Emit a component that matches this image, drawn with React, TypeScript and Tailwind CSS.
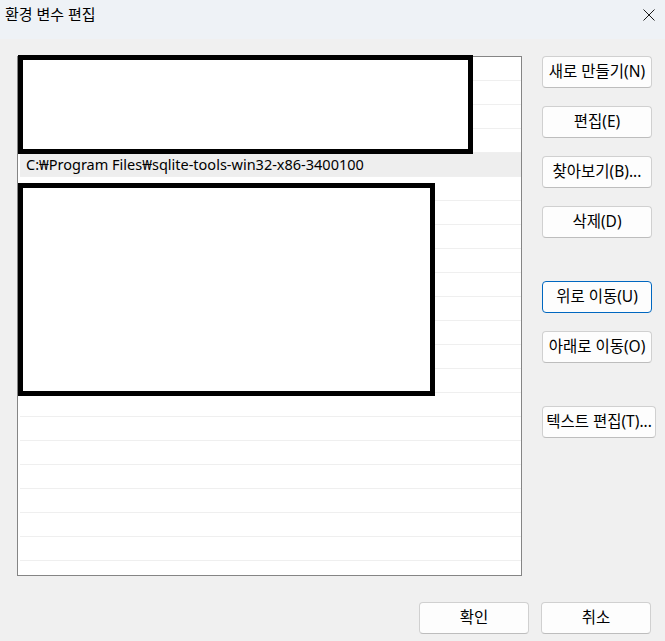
import React from 'react';

const FONT = { fontFamily: '"Noto Sans", "Noto Sans CJK KR", sans-serif' };

function WinButton({ label, width = 'w-[110px]', focused = false }: { label: string; width?: string; focused?: boolean }) {
  return (
    <button
      className={`${width} h-[32px] shrink-0 rounded-[4px] border bg-[#fdfdfd] text-[15.5px] leading-none text-black flex items-center justify-center whitespace-nowrap ${
        focused ? 'border-[#0067c0]' : 'border-[#d0d0d0] border-b-[#bdbdbd]'
      }`}
    >
      {label}
    </button>
  );
}

export default function App() {
  const rows = Array.from({ length: 22 }, (_, i) => i);

  return (
    <div className="relative w-[665px] h-[641px] flex flex-col bg-[#f0f0f0] overflow-hidden text-black" style={FONT}>
      {/* Title bar */}
      <div className="h-[39px] shrink-0 bg-[#eef2f6] flex items-start justify-between">
        <div className="pl-[5px] pt-[4px] text-[15px] leading-[20px]">환경 변수 편집</div>
        <div className="pr-[10px] pt-[9px]">
          <svg width="12" height="12" viewBox="0 0 12 12" fill="none" stroke="#1a1a1a" strokeWidth="1">
            <line x1="0.5" y1="0.5" x2="11.5" y2="11.5" />
            <line x1="11.5" y1="0.5" x2="0.5" y2="11.5" />
          </svg>
        </div>
      </div>

      {/* Body */}
      <div className="flex-1 flex pt-[17px] pl-[17px]">
        {/* Path list */}
        <div className="w-[505px] h-[520px] border border-[#858585] bg-white overflow-hidden pl-[2px]">
          {rows.map((i) => (
            <div
              key={i}
              className={`h-[24px] border-b border-[#efefef] flex items-center pl-[6px] text-[14.5px] ${
                i === 4 ? 'bg-[#eeeeee]' : ''
              }`}
            >
              {i === 4 ? 'C:₩Program Files₩sqlite-tools-win32-x86-3400100' : ''}
            </div>
          ))}
        </div>

        {/* Side buttons */}
        <div className="ml-[20px] flex flex-col">
          <div className="flex flex-col gap-[18px]">
            <WinButton label="새로 만들기(N)" />
            <WinButton label="편집(E)" />
            <WinButton label="찾아보기(B)..." />
            <WinButton label="삭제(D)" />
          </div>
          <div className="mt-[43px] flex flex-col gap-[18px]">
            <WinButton label="위로 이동(U)" focused />
            <WinButton label="아래로 이동(O)" />
          </div>
          <div className="mt-[43px]">
            <WinButton label="텍스트 편집(T)..." width="w-[114px]" />
          </div>
        </div>
      </div>

      {/* Footer buttons */}
      <div className="h-[39px] shrink-0 flex justify-end gap-[12px] pr-[14px] items-start">
        <WinButton label="확인" />
        <WinButton label="취소" />
      </div>

      {/* Redaction boxes */}
      <div className="absolute left-[18px] top-[55px] w-[455px] h-[99px] border-[5px] border-black bg-white" />
      <div className="absolute left-[18px] top-[183px] w-[417px] h-[213px] border-[5px] border-black bg-white" />
    </div>
  );
}
